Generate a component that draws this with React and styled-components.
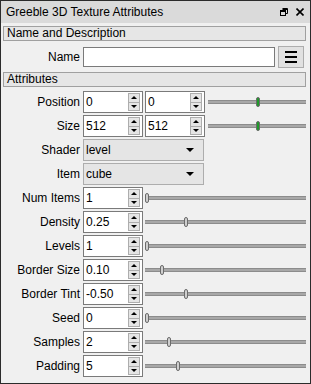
import styled, { createGlobalStyle } from "styled-components";

const GlobalStyle = createGlobalStyle`
  html, body {
    margin: 0;
    padding: 0;
    background: #f0f0f0;
  }
  body {
    font-family: Tahoma, "Liberation Sans", Arial, sans-serif;
    font-size: 12px;
    color: #000;
  }
`;

const Frame = styled.div`
  width: 311px;
  height: 384px;
  box-sizing: border-box;
  border: 1px solid #2b2b2b;
  background: #f0f0f0;
  display: flex;
  flex-direction: column;
`;

const TitleBar = styled.div`
  height: 22px;
  background: #dadada;
  display: flex;
  align-items: center;
  justify-content: space-between;
  padding: 0 6px 0 5px;
`;

const Title = styled.div`
  font-size: 12px;
`;

const TitleIcons = styled.div`
  display: flex;
  align-items: center;
  gap: 8px;
`;

const Body = styled.div`
  padding: 3px 4px 0 2px;
  display: flex;
  flex-direction: column;
`;

const SectionHeader = styled.div`
  flex: 1;
  height: 13px;
  line-height: 13px;
  border: 1px solid #a0a0a0;
  background: #e6e6e6;
  padding-left: 3px;
  font-size: 12px;
`;

const Row = styled.div`
  display: flex;
  align-items: center;
  height: ${({ $auto }) => ($auto ? "auto" : "22px")};
  margin-top: ${({ $top }) => $top ?? 2}px;
`;

const Label = styled.div`
  width: 80px;
  text-align: right;
  padding-right: 3px;
  box-sizing: border-box;
  white-space: nowrap;
`;

const TextInput = styled.div`
  width: 192px;
  height: 20px;
  box-sizing: border-box;
  border: 1px solid #7a7a7a;
  background: #fff;
`;

const MenuButton = styled.div`
  width: 26px;
  height: 22px;
  margin-left: 3px;
  box-sizing: border-box;
  border: 1px solid #adadad;
  background: #e1e1e1;
  display: flex;
  flex-direction: column;
  align-items: center;
  justify-content: center;
  gap: 3px;

  span {
    display: block;
    width: 12px;
    height: 2px;
    background: #000;
  }
`;

const Spin = styled.div`
  width: 60px;
  height: 22px;
  box-sizing: border-box;
  border: 1px solid #7a7a7a;
  background: #fff;
  display: flex;
  align-items: center;
  margin-right: ${({ $gap }) => $gap ?? 2}px;
  flex: none;
`;

const SpinText = styled.div`
  flex: 1;
  padding-left: 2px;
`;

const SpinButtons = styled.div`
  width: 12px;
  height: 18px;
  margin-right: 2px;
  display: flex;
  flex-direction: column;
`;

const SpinHalf = styled.div`
  flex: 1;
  box-sizing: border-box;
  border: 1px solid #adadad;
  ${({ $down }) => ($down ? "border-top: none;" : "")}
  background: #e5e5e5;
  display: flex;
  align-items: center;
  justify-content: center;

  &::after {
    content: "";
    width: 0;
    height: 0;
    border-left: 3px solid transparent;
    border-right: 3px solid transparent;
    ${({ $down }) =>
      $down ? "border-top: 3px solid #000;" : "border-bottom: 3px solid #000;"}
  }
`;

const Combo = styled.div`
  width: 121px;
  height: 22px;
  box-sizing: border-box;
  border: 1px solid #adadad;
  background: #e5e5e5;
  display: flex;
  align-items: center;
  justify-content: space-between;
  padding: 0 9px 0 2px;

  &::after {
    content: "";
    border-left: 4px solid transparent;
    border-right: 4px solid transparent;
    border-top: 4px solid #000;
  }
`;

const Slider = styled.div`
  flex: 1;
  height: 22px;
  position: relative;
  margin-left: 1px;
`;

const Groove = styled.div`
  position: absolute;
  left: 0;
  right: 0;
  top: 9px;
  height: 4px;
  box-sizing: border-box;
  background: #a8a8a8;
  border-top: 1px solid #8c8c8c;
  border-bottom: 1px solid #8c8c8c;
`;

const Handle = styled.div`
  position: absolute;
  top: 6px;
  width: 4px;
  height: 10px;
  box-sizing: border-box;
  border-radius: 2px;
  border: 1px solid #6c6c6c;
  background: ${({ $green }) => ($green ? "#1f9a2a" : "#cfcfcf")};
`;

const SpinBox = ({ value, gap }) => (
  <Spin $gap={gap}>
    <SpinText>{value}</SpinText>
    <SpinButtons>
      <SpinHalf />
      <SpinHalf $down />
    </SpinButtons>
  </Spin>
);

const Track = ({ pos, green }) => (
  <Slider>
    <Groove />
    <Handle $green={green} style={{ left: pos }} />
  </Slider>
);

const single = [
  { label: "Num Items", value: "1", pos: 0 },
  { label: "Density", value: "0.25", pos: 39 },
  { label: "Levels", value: "1", pos: 0 },
  { label: "Border Size", value: "0.10", pos: 15 },
  { label: "Border Tint", value: "-0.50", pos: 39 },
  { label: "Seed", value: "0", pos: 0 },
  { label: "Samples", value: "2", pos: 22 },
  { label: "Padding", value: "5", pos: 31 },
];

const App = () => {
  return (
    <>
      <GlobalStyle />
      <Frame>
        <TitleBar>
          <Title>Greeble 3D Texture Attributes</Title>
          <TitleIcons>
            <svg width="8" height="8" viewBox="0 0 8 8">
              <path d="M2.5 0.5h5v5h-2" fill="none" stroke="#000" />
              <path d="M2.5 1.5h5" stroke="#000" />
              <rect x="0.5" y="2.5" width="5" height="5" fill="none" stroke="#000" />
              <path d="M0.5 3.5h5" stroke="#000" />
            </svg>
            <svg width="8" height="8" viewBox="0 0 8 8">
              <path d="M0.5 0.5l7 7M7.5 0.5l-7 7" stroke="#000" strokeWidth="1.6" />
            </svg>
          </TitleIcons>
        </TitleBar>
        <Body>
          <Row $auto $top={0}>
            <SectionHeader>Name and Description</SectionHeader>
          </Row>
          <Row $top={5}>
            <Label>Name</Label>
            <TextInput />
            <MenuButton>
              <span />
              <span />
              <span />
            </MenuButton>
          </Row>
          <Row $auto $top={4}>
            <SectionHeader>Attributes</SectionHeader>
          </Row>
          <Row $top={4}>
            <Label>Position</Label>
            <SpinBox value="0" gap={2} />
            <SpinBox value="0" gap={2} />
            <Track pos={48} green />
          </Row>
          <Row>
            <Label>Size</Label>
            <SpinBox value="512" gap={2} />
            <SpinBox value="512" gap={2} />
            <Track pos={48} green />
          </Row>
          <Row>
            <Label>Shader</Label>
            <Combo>level</Combo>
          </Row>
          <Row>
            <Label>Item</Label>
            <Combo>cube</Combo>
          </Row>
          {single.map((r) => (
            <Row key={r.label}>
              <Label>{r.label}</Label>
              <SpinBox value={r.value} gap={1} />
              <Track pos={r.pos} />
            </Row>
          ))}
        </Body>
      </Frame>
    </>
  );
};

export default App;
